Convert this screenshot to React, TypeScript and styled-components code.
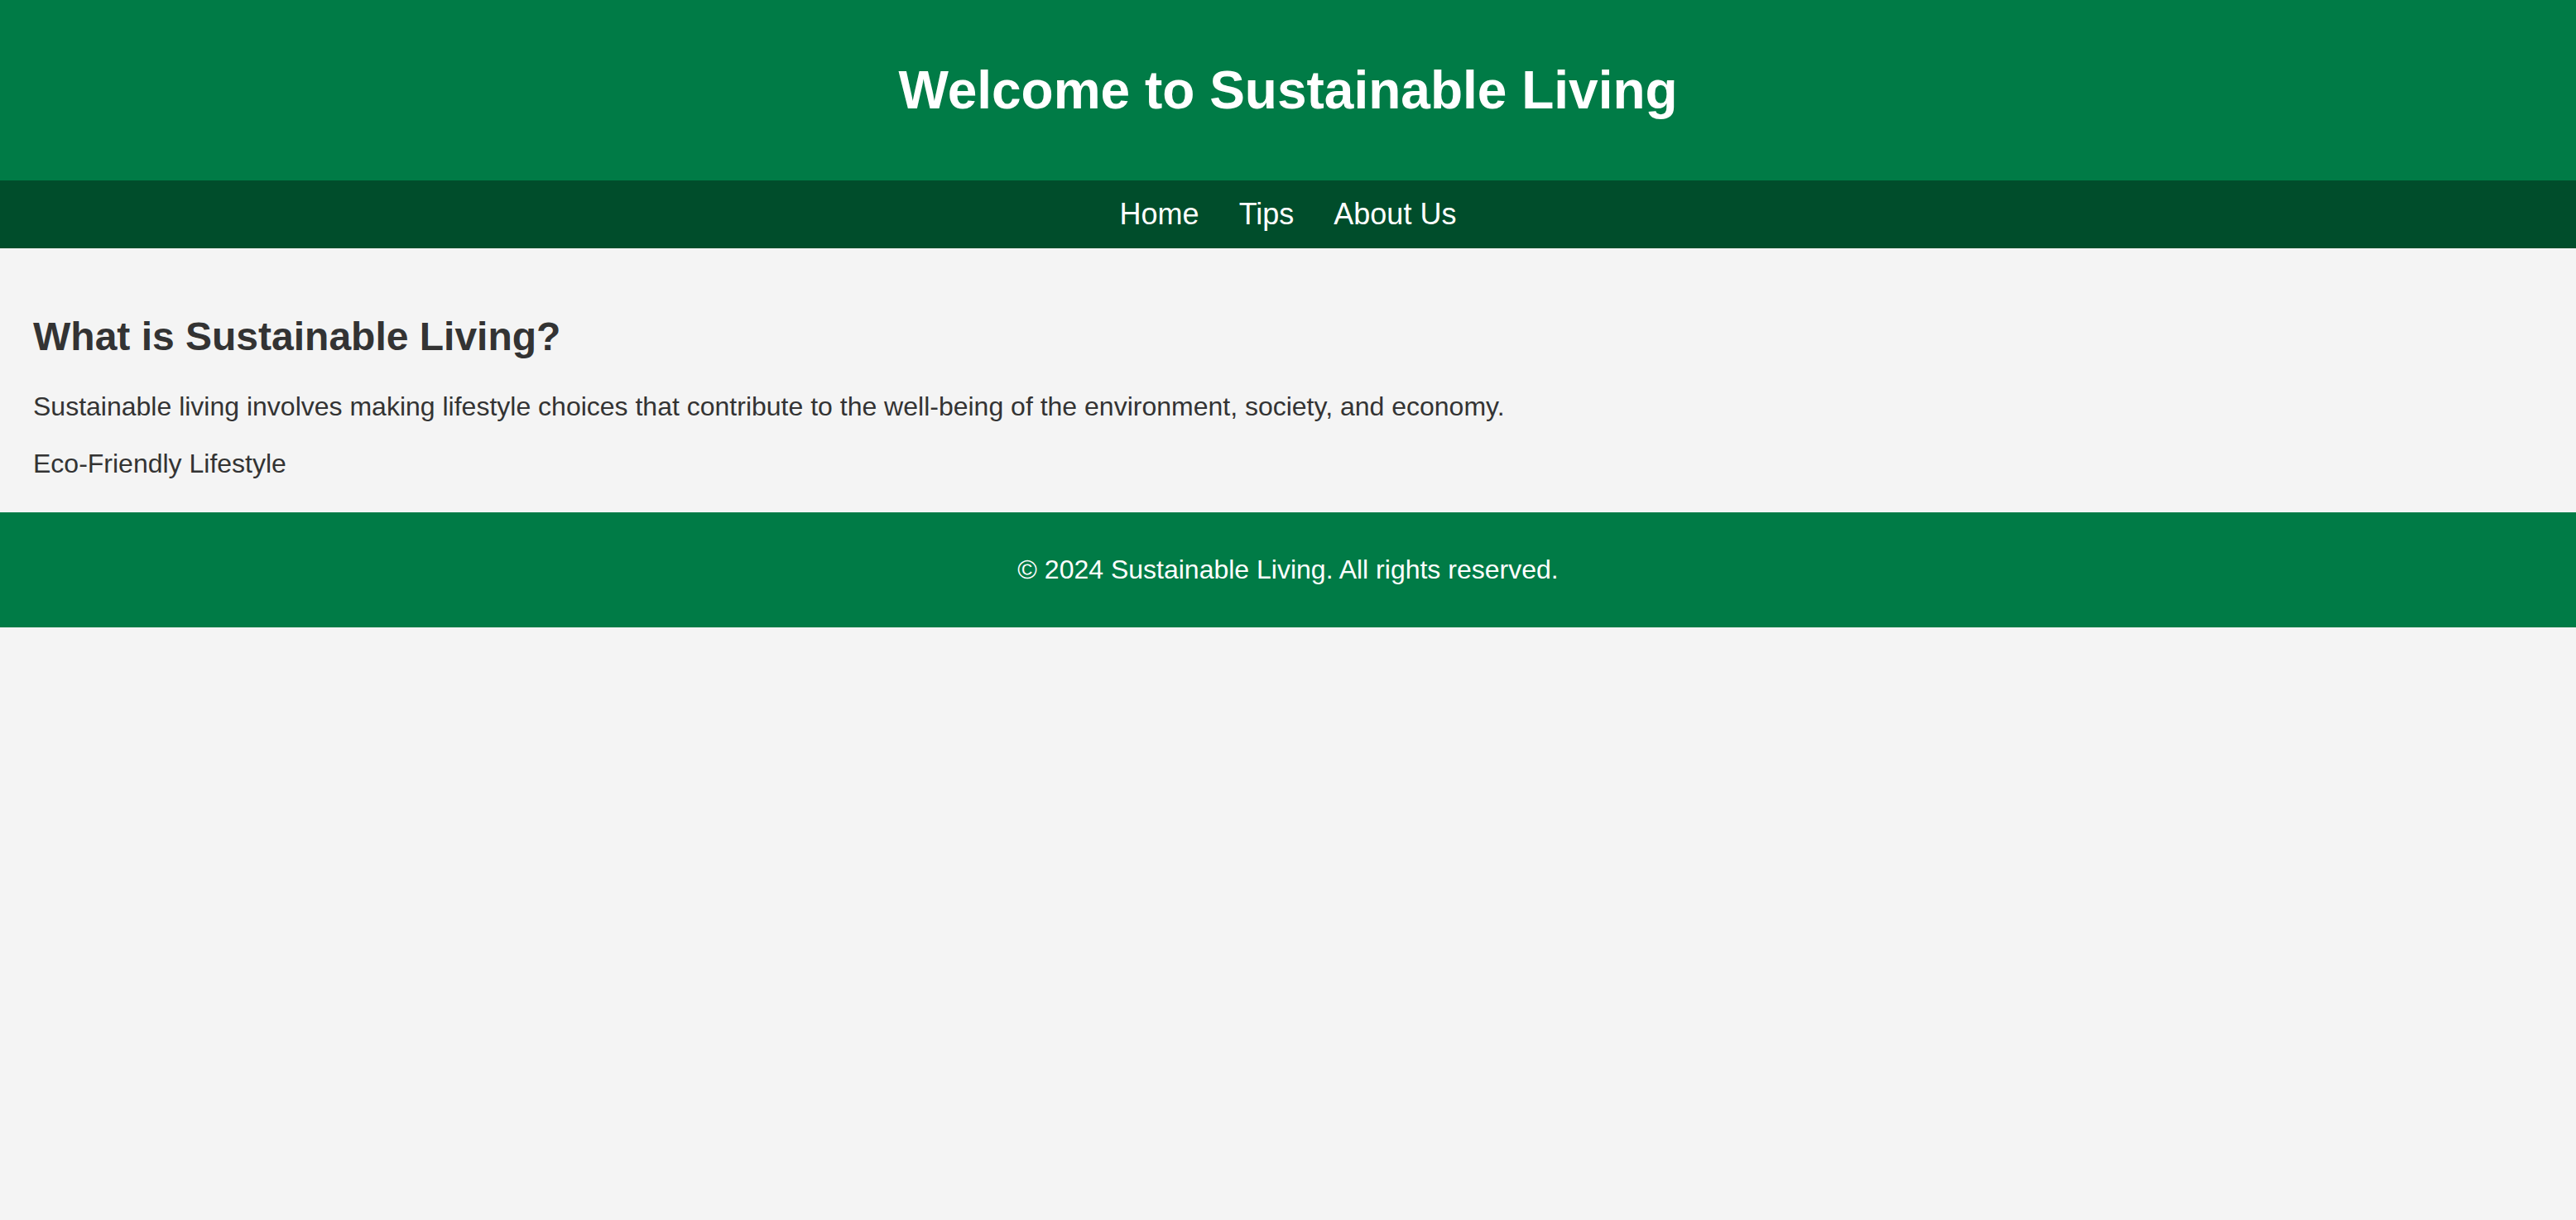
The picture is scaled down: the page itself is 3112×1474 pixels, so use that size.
import React from "react";
import styled, { createGlobalStyle } from "styled-components";

const GlobalStyle = createGlobalStyle`
  html, body {
    margin: 0;
    padding: 0;
    background: #f4f4f4;
    font-family: "Liberation Sans", Arial, sans-serif;
    color: #333333;
  }
`;

const Header = styled.header`
  background: #007b46;
  color: #ffffff;
  text-align: center;
  padding: 30px 0;
`;

const Title = styled.h1`
  margin: 42px 0;
  font-size: 64px;
  font-weight: 700;
  line-height: normal;
`;

const Nav = styled.nav`
  background: #004d2b;
  display: flex;
  justify-content: center;
  gap: 48px;
  padding: 20px 0;
`;

const NavLink = styled.a`
  color: #ffffff;
  text-decoration: none;
  font-size: 36px;
  line-height: normal;
`;

const Main = styled.main`
  padding: 40px 40px;
`;

const Heading = styled.h2`
  margin: 39px 0;
  font-size: 48px;
  font-weight: 700;
  line-height: normal;
  color: #333333;
`;

const Text = styled.p<{ $last?: boolean }>`
  margin: ${(p) => (p.$last ? "30px 0 0" : "32px 0")};
  font-size: 32px;
  line-height: normal;
  color: #333333;
`;

const Footer = styled.footer`
  background: #007b46;
  color: #ffffff;
  text-align: center;
  padding: 20px 0;
`;

const FooterText = styled.p`
  margin: 31px 0;
  font-size: 32px;
  line-height: normal;
`;

export default function App() {
  return (
    <>
      <GlobalStyle />
      <Header>
        <Title>Welcome to Sustainable Living</Title>
      </Header>
      <Nav>
        <NavLink href="#">Home</NavLink>
        <NavLink href="#">Tips</NavLink>
        <NavLink href="#">About Us</NavLink>
      </Nav>
      <Main>
        <Heading>What is Sustainable Living?</Heading>
        <Text>
          Sustainable living involves making lifestyle choices that contribute to the
          well-being of the environment, society, and economy.
        </Text>
        <Text $last>Eco-Friendly Lifestyle</Text>
      </Main>
      <Footer>
        <FooterText>© 2024 Sustainable Living. All rights reserved.</FooterText>
      </Footer>
    </>
  );
}
